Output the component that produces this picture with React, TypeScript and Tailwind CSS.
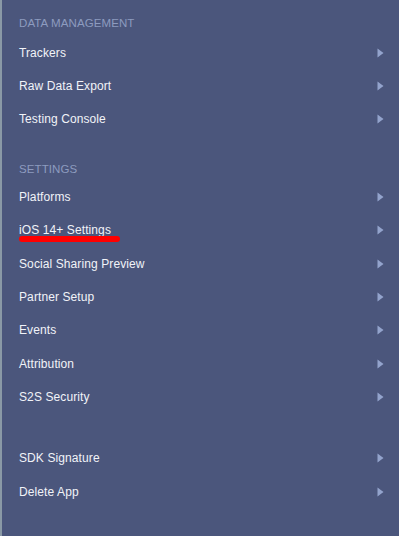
import React from "react";

const Arrow = () => (
  <svg width="7" height="10" viewBox="0 0 7 10" className="shrink-0">
    <path d="M0.5 0.5 L6.5 5 L0.5 9.5 Z" fill="#93a3cc" />
  </svg>
);

const Item = ({ label, underline }: { label: string; underline?: boolean }) => (
  <div className="relative flex h-[33.33px] items-center justify-between pl-[17px] pr-[15px]">
    <span className="text-[12px] tracking-[0.1px] text-[#f1f3f8]">{label}</span>
    <Arrow />
    {underline && (
      <div className="absolute left-[17px] top-[22.5px] h-[6px] w-[101px] rounded-full bg-[#ff0000]" />
    )}
  </div>
);

const Header = ({ label }: { label: string }) => (
  <div className="h-[20px] pl-[17px] text-[11.5px] leading-[20px] tracking-[0.1px] text-[#8d9bbf]">
    {label}
  </div>
);

export default function App() {
  return (
    <div
      className="h-[536px] w-[399px] overflow-hidden border-l-2 border-[#8a99a6] bg-[#4b567c]"
      style={{ fontFamily: '"Liberation Sans", Arial, sans-serif' }}
    >
      <div className="pt-[13px]">
        <Header label="DATA MANAGEMENT" />
        <div className="mt-[3px]">
          <Item label="Trackers" />
          <Item label="Raw Data Export" />
          <Item label="Testing Console" />
        </div>
        <div className="mt-[23px]">
          <Header label="SETTINGS" />
        </div>
        <div className="mt-[1.5px]">
          <Item label="Platforms" />
          <Item label="iOS 14+ Settings" underline />
          <Item label="Social Sharing Preview" />
          <Item label="Partner Setup" />
          <Item label="Events" />
          <Item label="Attribution" />
          <Item label="S2S Security" />
        </div>
        <div className="mt-[28px]">
          <Item label="SDK Signature" />
          <Item label="Delete App" />
        </div>
      </div>
    </div>
  );
}
